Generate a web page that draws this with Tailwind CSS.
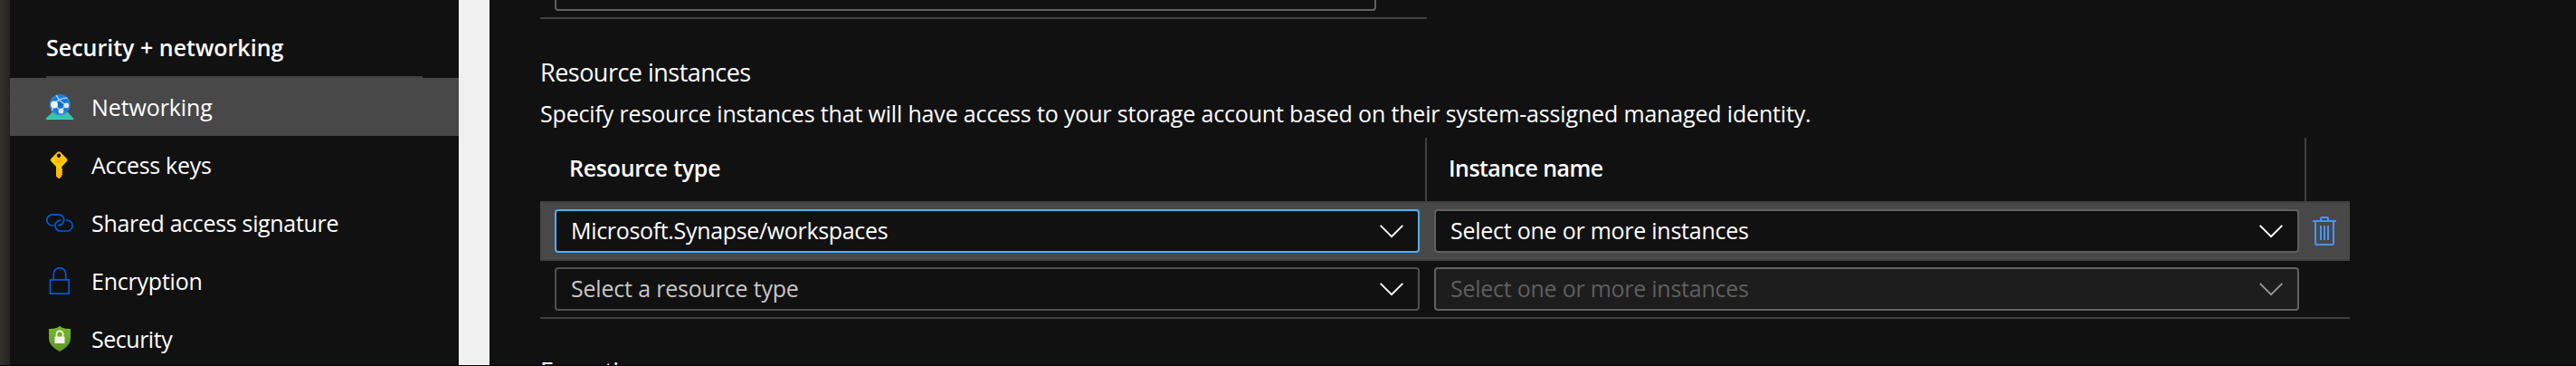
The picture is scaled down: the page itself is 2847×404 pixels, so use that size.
<!DOCTYPE html>
<html lang="en">
<head>
<meta charset="utf-8">
<title>Networking</title>
<script src="https://cdn.jsdelivr.net/npm/@tailwindcss/browser@4"></script>
</head>
<body class="h-[404px] overflow-hidden bg-[#111111] font-['Open_Sans','Noto_Sans',sans-serif] text-[25px] text-white">
<div class="flex h-[403px] w-[2847px] overflow-hidden whitespace-nowrap">
  <div class="w-[11px] shrink-0 bg-linear-to-r from-[#33322f] to-[#252422]"></div>

  <nav class="flex w-[496px] shrink-0 flex-col">
    <div class="flex h-[84px] shrink-0 items-start pl-10 pt-[32px] font-semibold leading-[40px]">Security + networking</div>
    <div class="ml-10 h-[2px] w-[416px] shrink-0 bg-[#404040]"></div>
    <a class="flex h-16 shrink-0 items-center gap-5 bg-[#484848] pl-10">
      <svg class="h-[30px] w-[30px]" viewBox="0 0 30 30">
        <defs>
          <radialGradient id="globe" cx=".5" cy=".5" r=".5"><stop offset="0" stop-color="#0f68c4"/><stop offset=".7" stop-color="#0f7ad8"/><stop offset="1" stop-color="#2b8ae8"/></radialGradient>
          <clipPath id="disc"><circle cx="15.2" cy="12.6" r="11.4"/></clipPath>
        </defs>
        <path d="M6.500 21H24L30 27.500H0z" fill="#37c2b1"/>
        <path d="M0 27.300H30V29H0z" fill="#2fe0bf"/>
        <circle cx="15.200" cy="12.600" r="11.400" fill="url(#globe)"/>
        <g clip-path="url(#disc)" fill="none" stroke="#9fcbf5" stroke-width="1.500">
          <path d="M9 12Q13 5.500 24 5M11 2L15 8L22 13M9 12L16 19.500L22 13M9 12L6 20"/>
        </g>
        <circle cx="9" cy="12.500" r="3.900" fill="#f4f4f4"/>
        <circle cx="22.300" cy="13.300" r="2.900" fill="#e4e4e4"/>
        <circle cx="16.500" cy="19.500" r="2.900" fill="#e4e4e4"/>
      </svg>
      <span class="pt-[2px] tracking-[-0.1px]">Networking</span>
    </a>
    <a class="flex h-16 shrink-0 items-center gap-5 pl-10">
      <svg class="h-[30px] w-[30px]" viewBox="0 0 30 30">
        <defs><linearGradient id="key" x1="0" y1="0" x2="0" y2="1"><stop offset="0" stop-color="#ffb716"/><stop offset=".4" stop-color="#ffd400"/><stop offset="1" stop-color="#ffb010"/></linearGradient></defs>
        <path fill="url(#key)" fill-rule="evenodd" d="M12.500 .8Q14 -.4 15.600 .8L22.700 8Q24.200 9.700 22.700 11.300L17.300 17V19L18.300 20.200L17.300 21.500L18.300 22.700L17.300 24L18.300 25.200L17.300 26.500V27.500L14.800 30H13.500L11 27.500V17L5.600 11.300Q4.100 9.700 5.600 8zM14 2.500A2.200 2.200 0 1 0 14 6.900A2.200 2.200 0 1 0 14 2.500z"/>
        <path d="M9.500 9.800H19M9.500 12H19" stroke="#ff9b12" stroke-width="1"/>
        <path d="M12.700 18.500V27.500" stroke="#ff9b12" stroke-width=".9" opacity=".7"/>
      </svg>
      <span class="pt-[2px] tracking-[-0.29px]">Access keys</span>
    </a>
    <a class="flex h-16 shrink-0 items-center gap-5 pl-10">
      <svg class="h-[30px] w-[30px]" viewBox="0 0 30 30" fill="none" stroke="#005ad9" stroke-width="1.700">
        <path d="M8.300 14.200H6.800A6.100 6.100 0 0 1 6.800 5.500" stroke="none"/>
        <path d="M8.300 18H6.900A6.100 6.100 0 0 1 6.900 5.800H13.800A5.900 5.900 0 0 1 17.500 16.200Q15.500 17.700 13.200 17.800"/>
        <path d="M21.700 12H23.100A6 6 0 0 1 23.100 24H16.200A5.900 5.900 0 0 1 12.500 13.300Q14.400 11.900 16.800 11.900"/>
      </svg>
      <span class="pt-[2px] tracking-[-0.33px]">Shared access signature</span>
    </a>
    <a class="flex h-16 shrink-0 items-center gap-5 pl-10">
      <svg class="h-[30px] w-[30px]" viewBox="0 0 30 30" fill="none" stroke="#005ad9" stroke-width="1.700">
        <path d="M4.500 13.800H25.200V29.200H4.500zM8.300 13.800V7.400A6.700 6.700 0 0 1 21.700 7.400V13.800"/>
      </svg>
      <span class="pt-[2px] tracking-[-0.22px]">Encryption</span>
    </a>
    <a class="flex h-16 shrink-0 items-center gap-5 pl-10">
      <svg class="h-[30px] w-[30px]" viewBox="0 0 30 30">
        <defs><linearGradient id="shield" x1="0" y1="0" x2="0" y2="1"><stop offset="0" stop-color="#78b92c"/><stop offset="1" stop-color="#5e9624"/></linearGradient></defs>
        <path fill="url(#shield)" d="M15 .8C18 3.500 21.500 4 27 4V14.500C27 22 19 27 15 29C11 27 3 22 3 14.500V4C8.500 4 12 3.500 15 .8z"/>
        <path d="M11.500 13.300V9.800A3.500 3.500 0 0 1 18.500 9.800V13.300" fill="none" stroke="#f2f2f2" stroke-width="1.800"/>
        <path d="M10.300 12.500H19.700Q20.500 12.500 20.500 13.300V20H9.500V13.300Q9.500 12.500 10.300 12.500z" fill="#f2f2f2"/>
      </svg>
      <span class="pt-[2px] tracking-[-0.48px]">Security</span>
    </a>
  </nav>

  <div class="w-[34px] shrink-0 bg-[#f0f0f0]"></div>

  <main class="flex w-[2056px] shrink-0 flex-col pl-14">
    <div class="ml-4 h-3 w-[908px] shrink-0 rounded-b-[4px] border-x-2 border-b-2 border-[#606060]"></div>
    <div class="mt-[7px] h-[2px] w-[980px] shrink-0 bg-[#404040]"></div>
    <h2 class="mt-[39px] h-10 shrink-0 text-[27px] leading-[40px] tracking-[-0.52px]">Resource instances</h2>
    <p class="mt-[5px] h-10 shrink-0 leading-[40px] tracking-[-0.163px]">Specify resource instances that will have access to your storage account based on their system-assigned managed identity.</p>

    <div class="mt-[7px] flex h-[70px] shrink-0 items-center font-semibold">
      <div class="flex h-full w-[980px] items-center border-r-2 border-[#404040] pl-[32px] pb-[2px] tracking-[-0.29px]">Resource type</div>
      <div class="flex h-full w-[972px] items-center border-r-2 border-[#404040] pl-[24px] pb-[2px] tracking-[-0.56px]">Instance name</div>
    </div>

    <div class="flex h-[66px] w-[2000px] shrink-0 items-center border-y-2 border-[#404040] bg-[#484848] pl-4">
      <div class="flex h-12 w-[956px] items-center justify-between rounded-[4px] border-2 border-[#4eafff] bg-[#111111] pl-4 pr-4">
        <span class="tracking-[-0.33px]">Microsoft.Synapse/workspaces</span>
        <svg class="h-4 w-[26px]" viewBox="0 0 26 16" fill="none" stroke="#ffffff" stroke-width="1.900"><path d="M.7 1.800L13 14.200L25.300 1.800"/></svg>
      </div>
      <div class="ml-4 flex h-12 w-[956px] items-center justify-between rounded-[4px] border-2 border-[#606060] bg-[#111111] pl-4 pr-4">
        <span class="tracking-[-0.25px]">Select one or more instances</span>
        <svg class="h-4 w-[26px]" viewBox="0 0 26 16" fill="none" stroke="#ffffff" stroke-width="1.900"><path d="M.7 1.800L13 14.200L25.300 1.800"/></svg>
      </div>
      <svg class="ml-[15px] h-8 w-[26px]" viewBox="0 0 26 32" fill="none" stroke="#4894fe" stroke-width="2">
        <path d="M0 5H26M9 5V2.500Q9 1 10.500 1H15.500Q17 1 17 2.500V5M3 5V29.500Q3 31 4.500 31H21.500Q23 31 23 29.500V5M9 10V26M13 10V26M17 10V26"/>
      </svg>
    </div>

    <div class="flex h-16 w-[2000px] shrink-0 items-start border-b-2 border-[#404040] pl-4 pt-[7px]">
      <div class="flex h-12 w-[956px] items-center justify-between rounded-[4px] border-2 border-[#505050] bg-[#111111] pl-4 pr-4">
        <span class="tracking-[-0.19px] text-[#c8c6c4]">Select a resource type</span>
        <svg class="h-4 w-[26px]" viewBox="0 0 26 16" fill="none" stroke="#ffffff" stroke-width="1.900"><path d="M.7 1.800L13 14.200L25.300 1.800"/></svg>
      </div>
      <div class="ml-4 flex h-12 w-[956px] items-center justify-between rounded-[4px] border-2 border-[#606060] bg-[#1d1d1d] pl-4 pr-4">
        <span class="tracking-[-0.25px] text-[#5f5f5f]">Select one or more instances</span>
        <svg class="h-4 w-[26px]" viewBox="0 0 26 16" fill="none" stroke="#979797" stroke-width="1.900"><path d="M.7 1.800L13 14.200L25.300 1.800"/></svg>
      </div>
    </div>

    <h2 class="mt-[38px] h-10 shrink-0 text-[27px] leading-[40px] tracking-[-0.52px]">Exceptions</h2>
  </main>
</div>
<div class="h-px w-full bg-[#080307]"></div>
</body>
</html>
